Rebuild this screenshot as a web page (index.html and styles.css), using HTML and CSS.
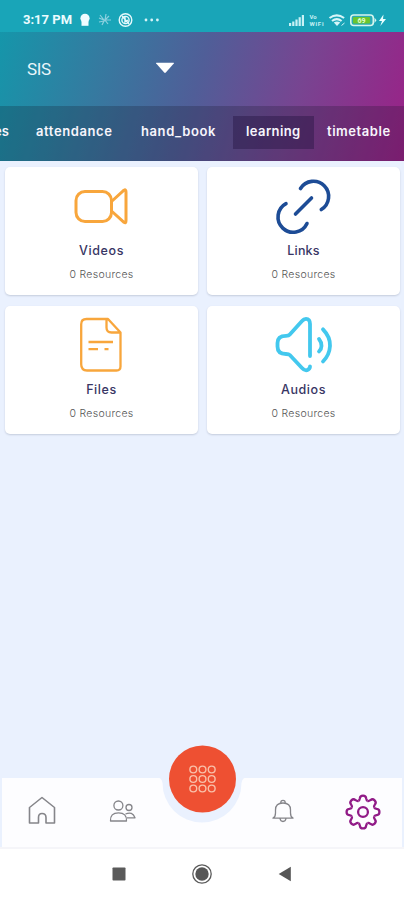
FILE: index.html
```html
<!DOCTYPE html>
<html lang="en">
<head>
<meta charset="utf-8">
<title>SIS</title>
<link rel="stylesheet" href="styles.css">
</head>
<body>
<div class="statusbar">
  <span class="time">3:17 PM</span>
  <svg class="left-icons" width="84" height="16" viewBox="0 0 84 16">
    <circle cx="7" cy="6.3" r="4.6" fill="#effcff"/><path d="M3.500 9h7v4.800H3.500z" fill="#effcff"/>
    <g fill="none" stroke="#8bd0df" stroke-width="1.2"><path d="M22 3l4 5-5-2M28 2l-1 6 4-4M33 8l-6 0 3 4M21 10l5-1-2 4"/></g>
    <g fill="none" stroke="#e5f9fc" stroke-width="1.4"><circle cx="47.5" cy="8" r="6.3"/><circle cx="47.5" cy="8" r="3.6"/><path d="M44 4l7 8M47 5v5l3-2"/></g>
    <g fill="#d6f4f8"><circle cx="68" cy="8" r="1.4"/><circle cx="73.7" cy="8" r="1.4"/><circle cx="79.4" cy="8" r="1.4"/></g>
  </svg>
  <svg class="right-icons" width="100" height="16" viewBox="0 0 100 16">
    <g fill="#c9f1f5"><rect x="0" y="11" width="2.2" height="3"/><rect x="3.2" y="9.5" width="2.2" height="4.5"/><rect x="6.400" y="7.5" width="2.2" height="6.5"/><rect x="9.600" y="5.2" width="2.2" height="8.8"/><rect x="12.800" y="3" width="2.2" height="11"/></g>
    <text x="20.5" y="7" class="tiny">Vo</text><text x="20.5" y="14" class="tiny" textLength="14">WiFi</text>
    <g fill="none" stroke="#d6f5f8" stroke-width="2.100"><path d="M40.500 6q7.3-5.400 14.6 0M43 9q4.800-3.800 9.600 0"/></g>
    <path d="M44.800 10.5q3.2-1.8 6.4 0L48 14z" fill="#d6f5f8"/><path d="M52.500 13.500l3-2.500" stroke="#d6f5f8"/>
    <rect x="61.800" y="3" width="22.500" height="10.500" rx="3" fill="#2aabb5" stroke="#d5f5ee" stroke-width="1.6"/>
    <rect x="64" y="5" width="17" height="6.500" rx="1" fill="#69c52f"/><text x="68.500" y="10.900" class="charge">69</text>
    <path d="M85.500 5.5l2 2.7-2 2.7z" fill="#d5f5ee"/><path d="M94.5 2.500L90 9h3l-1.700 5L97 7h-3z" fill="#eaffff"/>
  </svg>
</div>
<header class="header">
  <div class="school">
    <span class="school-name">SIS</span>
    <svg class="caret" width="20" height="12" viewBox="0 0 20 12"><path d="M1.5.8h17q1 0 .3.8L10.8 10.5q-.8.8-1.6 0L1.200 1.600Q.5.8 1.500.8z" fill="#fff"/></svg>
  </div>
  <nav class="tabs">
    <span class="tab tab-cut">es</span><span class="tab attendance">attendance</span><span class="tab handbook">hand_book</span><span class="tab learning">learning</span><span class="tab timetable">timetable</span>
  </nav>
</header>
<main class="grid">
  <section class="card">
    <svg width="60" height="60" viewBox="0 0 60 60" fill="none" stroke="#f8a63c" stroke-width="3" stroke-linejoin="round"><rect x="4" y="15.500" width="35.500" height="30" rx="9"/><path d="M39.500 25.500L52 14.200Q54 13 54 16V44.500Q54 47.800 52 46.300L39.500 35"/></svg>
    <h2 class="name">Videos</h2><p class="count">0 Resources</p>
  </section>
  <section class="card">
    <svg width="60" height="60" viewBox="0 0 60 60" fill="none" stroke="#1d4c96" stroke-width="3.600" stroke-linecap="round"><path d="M26.500 12.500A15.200 15.200 0 1 1 47.300 33.500M12 27.700A15.200 15.200 0 1 0 33 47.500M21.500 38L37.500 22"/></svg>
    <h2 class="name links">Links</h2><p class="count">0 Resources</p>
  </section>
  <section class="card lower">
    <svg width="60" height="60" viewBox="0 0 60 60" fill="none" stroke="#f8a63c" stroke-width="2.300" stroke-linejoin="round"><path d="M36 4H14.500Q9.200 4 9.200 9.300V49.300Q9.200 55.500 15 55.500H44.500Q48.500 55.500 48.500 51.500V17.500zM34.500 4.500V12.500Q34.500 17.500 39.500 17.500H48M16.500 27H41M16.500 34.200H26M32.500 34.200H36.500"/></svg>
    <h2 class="name">Files</h2><p class="count">0 Resources</p>
  </section>
  <section class="card lower">
    <svg width="60" height="60" viewBox="0 0 60 60" fill="none" stroke="#43c8ee" stroke-width="3.800" stroke-linecap="round" stroke-linejoin="round"><path d="M36 41V9Q36 3.800 32 3.800Q29.800 3.800 28 6L15.800 19.500Q14.800 20.800 12 20.800Q3.500 20.800 3.500 28V31.500Q3.500 39 12 39Q14.800 39 15.800 40L28 53Q30.500 55.800 33 55.200Q36 54 36 51.500M49 14.300Q56.500 22 56 31Q55.500 40 49 46.500M45 24Q47.500 27 47.500 31Q47.500 34 45 36.500"/></svg>
    <h2 class="name">Audios</h2><p class="count">0 Resources</p>
  </section>
</main>
<footer class="bottom">
  <nav class="dock">
    <svg width="80" height="68" viewBox="0 0 80 68" fill="none" stroke="#85858a" stroke-width="1.600" stroke-linejoin="round"><path d="M27.500 28.500L40 18.500L52.500 28.500V44H44V38.500Q44 34.500 40 34.500Q36.500 34.500 36.500 38.500V44H27.500z"/></svg>
    <svg width="80" height="68" viewBox="0 0 80 68" fill="none" stroke="#85858a" stroke-width="1.300" stroke-linejoin="round"><circle cx="36.400" cy="26.500" r="4.500"/><circle cx="47" cy="28.500" r="3"/><path d="M28.500 42Q28 33.800 36.500 33.800Q45 33.800 44.500 42zM43.500 35Q50.500 32 53 38.800H45"/></svg>
    <div class="center"></div>
    <svg width="80" height="68" viewBox="0 0 80 68" fill="none" stroke="#85858a" stroke-width="1.300" stroke-linejoin="round"><path d="M38.700 24Q38.700 21.300 41 21.300Q43.300 21.300 43.300 24M31 39.200Q33.500 38 33.500 34V31Q33.500 24 41 24Q48.500 24 48.500 31V34Q48.500 38 51 39.200zM38 39.500Q38.500 42.500 41 42.500Q43.500 42.500 44 39.500"/></svg>
    <svg width="80" height="68" viewBox="0 0 80 68" fill="none" stroke="#911b87" stroke-width="2.300"><defs><path id="tooth" d="M-4.600-11.100C-3.400-11.600-3.300-12.600-3.100-13.800C-2.800-17.300 2.800-17.300 3.100-13.800C3.300-12.600 3.400-11.600 4.600-11.100"/></defs><g transform="translate(41 33)"><circle r="4.900"/><use href="#tooth"/><use href="#tooth" transform="rotate(45)"/><use href="#tooth" transform="rotate(90)"/><use href="#tooth" transform="rotate(135)"/><use href="#tooth" transform="rotate(180)"/><use href="#tooth" transform="rotate(225)"/><use href="#tooth" transform="rotate(270)"/><use href="#tooth" transform="rotate(315)"/></g></svg>
    <svg class="fab" width="100" height="84" viewBox="0 0 100 84"><path d="M0 32.500H6Q9.500 32.500 10.500 38A39.500 39.500 0 0 0 89.500 38Q90.500 32.500 94 32.500H100V30H0z" fill="#eaf1fe"/><circle cx="50.500" cy="34" r="33.500" fill="#ee5032"/><g fill="none" stroke="#f9c0a9" stroke-width="1.400"><circle cx="41.300" cy="24.500" r="3.400"/><circle cx="50.500" cy="24.500" r="3.400"/><circle cx="59.700" cy="24.500" r="3.400"/><circle cx="41.300" cy="34" r="3.400"/><circle cx="50.500" cy="34" r="3.400"/><circle cx="59.700" cy="34" r="3.400"/><circle cx="41.300" cy="43.500" r="3.400"/><circle cx="50.500" cy="43.500" r="3.400"/><circle cx="59.700" cy="43.500" r="3.400"/></g></svg>
  </nav>
  <div class="system">
    <svg width="14" height="22" viewBox="0 0 14 22"><rect x=".5" y="4.500" width="13" height="13" rx=".8" fill="#5a5a5a"/></svg>
    <svg width="22" height="22" viewBox="0 0 22 22"><circle cx="11" cy="11" r="9.200" fill="none" stroke="#5a5a5a" stroke-width="1.300"/><circle cx="11" cy="11" r="6.700" fill="#565656"/></svg>
    <svg width="14" height="22" viewBox="0 0 14 22"><path d="M.7 11L12.800 3.700V18.300z" fill="#565656"/></svg>
  </div>
</footer>
</body>
</html>
```
FILE: styles.css
```css
* { box-sizing: border-box; }
body { margin: 0; height: 900px; display: flex; flex-direction: column; overflow: hidden; background: #eaf1fe; font-family: Inter, "Open Sans", sans-serif; }
svg { display: block; flex: none; }
.statusbar { height: 32px; flex: none; display: flex; align-items: center; background: #19a5b8; padding: 8px 15px 0 23px; color: #ebfcff; }
.time { font: 700 13px/16px Roboto, sans-serif; width: 55px; white-space: nowrap; }
.right-icons { margin-left: auto; }
.tiny { font: 700 6px Roboto, sans-serif; fill: #c9f1f5; }
.charge { font: 700 7px Roboto, sans-serif; fill: #e5ffd0; }
.header { height: 129px; flex: none; background: linear-gradient(106deg, #1596aa 0%, #357aa0 25%, #505e98 48%, #784491 72%, #9b2187 100%); }
.school { height: 74px; display: flex; align-items: center; padding-left: 27px; }
.school-name { width: 128px; font: 400 17px/20px Roboto, sans-serif; letter-spacing: -.4px; color: #e9f6fb; }
.caret { margin-top: -2px; }
.tabs { height: 55px; display: flex; align-items: center; background: rgba(18, 18, 36, .23); overflow: hidden; color: #f7f5fc; font-size: 13px; font-weight: 600; line-height: 31px; }
.tab { flex: none; white-space: nowrap; margin-top: -3px; height: 33px; }
.tab-cut { width: 42px; margin-left: -6px; }
.attendance { width: 105px; letter-spacing: .6px; }
.handbook { width: 92px; letter-spacing: .6px; }
.learning { width: 81px; padding-left: 13px; letter-spacing: .4px; background: rgba(35, 18, 65, .42); }
.timetable { margin-left: 13px; letter-spacing: .55px; }
.grid { flex: 1; display: grid; grid-template-columns: 193px 193px; grid-template-rows: 128px 128px; gap: 11px 9px; padding: 6px 5px; align-content: start; }
.card { display: flex; flex-direction: column; align-items: center; padding-top: 9px; background: #fff; border-radius: 5px; box-shadow: 0 1px 2px #c4ccdc; }
.name { margin: 6px 0 0; font-size: 12.500px; font-weight: 500; line-height: 18px; letter-spacing: .6px; color: #373564; }
.links { letter-spacing: .2px; }
.count { margin: 8px 0 0; font-size: 10.500px; line-height: 14px; font-weight: 300; color: #555; letter-spacing: .3px; }
.bottom { height: 122px; flex: none; }
.dock { position: relative; height: 69px; margin: 0 2px; display: flex; align-items: center; background: #fdfdff; }
.center { width: 80px; }
.fab { position: absolute; left: 150px; top: -33px; }
.system { height: 53px; display: flex; align-items: center; background: #fff; border-top: 2px solid #f5f5f9; padding: 0 112px 2px; justify-content: space-between; }
```
